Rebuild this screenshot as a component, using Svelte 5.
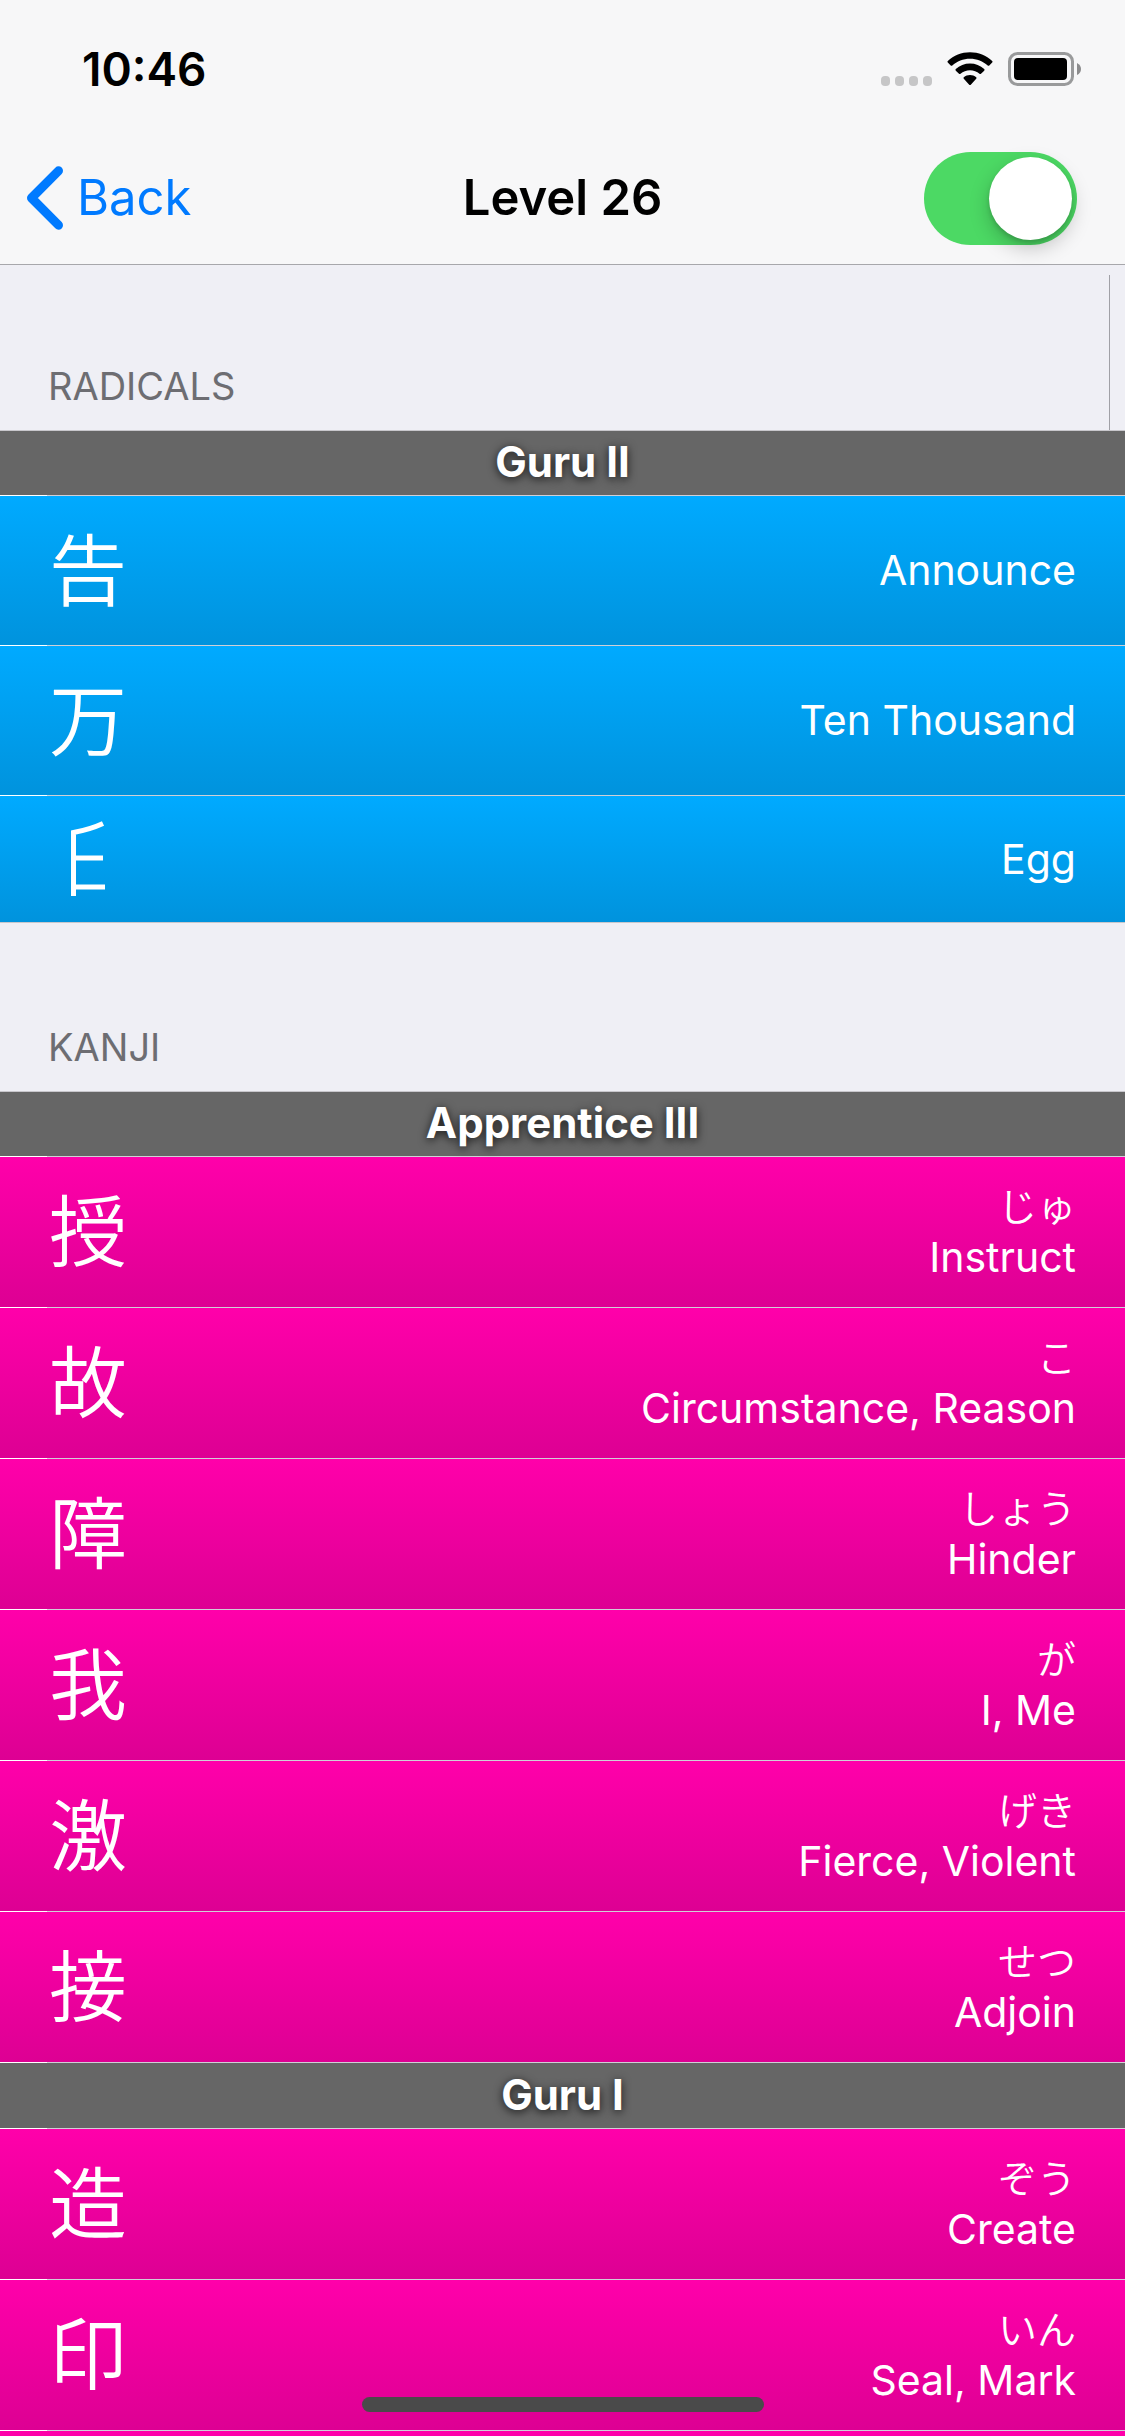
<script>
  let showAll = $state(true);

  const sections = [
    {
      title: 'Radicals',
      kind: 'radical',
      groups: [
        {
          stage: 'Guru II',
          items: [
            { glyph: '告', meaning: 'Announce' },
            { glyph: '万', meaning: 'Ten Thousand' },
            { drawn: true, meaning: 'Egg' }
          ]
        }
      ]
    },
    {
      title: 'Kanji',
      kind: 'kanji',
      groups: [
        {
          stage: 'Apprentice III',
          items: [
            { glyph: '授', reading: 'じゅ', meaning: 'Instruct' },
            { glyph: '故', reading: 'こ', meaning: 'Circumstance, Reason' },
            { glyph: '障', reading: 'しょう', meaning: 'Hinder' },
            { glyph: '我', reading: 'が', meaning: 'I, Me' },
            { glyph: '激', reading: 'げき', meaning: 'Fierce, Violent' },
            { glyph: '接', reading: 'せつ', meaning: 'Adjoin' }
          ]
        },
        {
          stage: 'Guru I',
          items: [
            { glyph: '造', reading: 'ぞう', meaning: 'Create' },
            { glyph: '印', reading: 'いん', meaning: 'Seal, Mark' },
            { meaning: '' }
          ]
        }
      ]
    }
  ];
</script>

<div class="screen">
  <header>
    <div class="status">
      <time>10:46</time>
      <div class="indicators">
        <svg class="signal" viewBox="0 0 51 34" aria-hidden="true">
          <g fill="#c6c6c7">
            <rect x="0" y="24" width="9" height="10" rx="4" />
            <rect x="14" y="24" width="9" height="10" rx="4" />
            <rect x="28" y="24" width="9" height="10" rx="4" />
            <rect x="42" y="24" width="9" height="10" rx="4" />
          </g>
        </svg>
        <svg class="wifi" viewBox="0 0 46 34" aria-hidden="true">
          <path d="M23 0.3C31.5 0.3 39.3 3.5 45.2 8.9Q46 9.7 45.2 10.5L42.3 13.5Q41.5 14.2 40.7 13.5C36 9.3 29.8 6.8 23 6.8S10 9.3 5.300 13.5Q4.500 14.200 3.700 13.500L0.800 10.500Q0 9.700 0.800 8.900C6.700 3.500 14.500 0.300 23 0.300Z" />
          <path d="M23 11.600C28.400 11.600 33.400 13.600 37.200 17.100Q38 17.900 37.200 18.700L34 21.800Q33.300 22.400 32.500 21.800C29.900 19.500 26.600 18.200 23 18.200S16.100 19.500 13.500 21.800Q12.700 22.400 12 21.800L8.800 18.700Q8 17.900 8.800 17.100C12.600 13.600 17.600 11.600 23 11.600Z" />
          <path d="M23 23C25.300 23 27.500 23.900 29.200 25.300Q30 26 29.200 26.800L23.800 32.700Q23 33.500 22.200 32.700L16.800 26.800Q16 26 16.800 25.300C18.500 23.900 20.700 23 23 23Z" />
        </svg>
        <svg class="battery" viewBox="0 0 74 34" aria-hidden="true">
          <rect x="1.500" y="1.500" width="63" height="31" rx="8" fill="none" stroke="#999a9b" stroke-width="3" />
          <rect x="6" y="6" width="53" height="22" rx="4" />
          <path d="M69 11Q73 13 73 17T69 23Z" fill="#8c8c8d" />
        </svg>
      </div>
    </div>
    <nav>
      <a class="back" href="#levels">
        <svg viewBox="0 0 38 64" aria-hidden="true">
          <path d="M32.500 4.800L5.500 32L32.500 59.200" fill="none" stroke="#007aff" stroke-width="9" stroke-linecap="round" stroke-linejoin="round" />
        </svg>
        <span>Back</span>
      </a>
      <h1>Level 26</h1>
      <input class="switch" type="checkbox" role="switch" aria-label="Show all items" bind:checked={showAll} />
    </nav>
  </header>

  <main>
    {#each sections as section}
      <section>
        <h2>{section.title}</h2>
        {#each section.groups as group}
          <div class="group">
            <h3>{group.stage}</h3>
            <ul>
              {#each group.items as item}
                <li>
                  <button class={['row', section.kind, item.drawn && 'short']} aria-label={item.meaning || 'More'}>
                    {#if item.drawn}
                      <svg class="egg" viewBox="0 0 78 78" aria-hidden="true">
                        <path d="M54 3.500Q41 9.500 24.500 12.500V76M24.500 38H54M24.500 67H56" fill="none" stroke="#fff" stroke-width="5" />
                      </svg>
                    {:else}
                      <span class="glyph" lang="ja">{item.glyph ?? ''}</span>
                    {/if}
                    <span class="answers">
                      {#if item.reading}<span class="reading" lang="ja">{item.reading}</span>{/if}
                      <span>{item.meaning}</span>
                    </span>
                  </button>
                </li>
              {/each}
            </ul>
          </div>
        {/each}
      </section>
    {/each}
    <div class="scroll-mark"></div>
  </main>
  <div class="home"></div>
</div>

<style>
  :global(body) {
    background: #efeff5;
  }
  .screen {
    position: relative;
    display: flex;
    flex-direction: column;
    height: 100vh;
    overflow: hidden;
    font-family: Inter, 'Noto Sans CJK JP', sans-serif;
    color: #000;
  }
  header {
    flex: none;
    background: #f7f7f8;
    border-bottom: 1px solid #a7a7ab;
  }
  .status {
    display: flex;
    justify-content: space-between;
    align-items: center;
    height: 132px;
    padding: 6px 43px 0 82px;
    box-sizing: border-box;
  }
  time {
    font-size: 46px;
    font-weight: 600;
    line-height: 54px;
  }
  .indicators {
    display: flex;
    gap: 15px;
  }
  .indicators svg {
    height: 34px;
  }
  .signal {
    width: 51px;
  }
  .wifi {
    width: 46px;
  }
  .battery {
    width: 74px;
  }
  nav {
    display: grid;
    grid-template-columns: 1fr auto 1fr;
    align-items: center;
    height: 132px;
    padding: 0 26px;
  }
  .back {
    display: flex;
    align-items: center;
    gap: 13px;
    color: #007aff;
    font-size: 49px;
    line-height: 60px;
    text-decoration: none;
  }
  .back svg {
    width: 38px;
    height: 64px;
  }
  h1 {
    margin: 0;
    font-size: 49px;
    font-weight: 600;
    line-height: 60px;
  }
  .switch {
    appearance: none;
    justify-self: end;
    display: flex;
    width: 153px;
    height: 93px;
    margin: 0 22px 0 0;
    padding: 5px;
    box-sizing: border-box;
    border-radius: 47px;
    background: #d8d8dc;
  }
  .switch::before {
    content: '';
    width: 83px;
    height: 83px;
    border-radius: 50%;
    background: #fff;
    box-shadow: 0 8px 20px rgba(0, 0, 0, 0.22), 0 3px 4px rgba(0, 0, 0, 0.14);
  }
  .switch:checked {
    justify-content: flex-end;
    background: #4cd964;
  }
  main {
    position: relative;
    flex: 1;
    min-height: 0;
    overflow: hidden;
  }
  h2 {
    display: flex;
    align-items: flex-end;
    box-sizing: border-box;
    height: 169px;
    margin: 0;
    padding: 0 48px 21px;
    border-bottom: 1px solid #c8c7cc;
    color: #6d6d72;
    font-size: 38px;
    font-weight: 400;
    line-height: 46px;
    text-transform: uppercase;
  }
  section:first-child h2 {
    height: 166px;
  }
  h3 {
    margin: 0;
    padding-bottom: 2px;
    background: #666;
    color: #fff;
    font-size: 42px;
    font-weight: 700;
    line-height: 62px;
    text-align: center;
    text-shadow: 0 2px 10px rgba(0, 0, 0, 0.8);
  }
  .group + .group h3 {
    line-height: 63px;
  }
  ul {
    margin: 0;
    padding: 0;
    list-style: none;
  }
  h3,
  li {
    border-bottom: 1px solid;
    border-image: linear-gradient(to right, #fff 48px, #d0cfd6 48px) 1;
  }
  section:first-child li:last-child {
    border-image: none;
    border-color: #c8c7cc;
  }
  .row {
    display: flex;
    align-items: center;
    justify-content: space-between;
    width: 100%;
    height: 150px;
    padding: 0 49px;
    border: 0;
    color: #fff;
    font-family: inherit;
    font-size: 41px;
    line-height: 51px;
    text-align: right;
  }
  .radical {
    height: 149px;
    background: linear-gradient(#0af, #0093dd);
  }
  .short {
    height: 126px;
  }
  .kanji {
    background: linear-gradient(#f0a, #dd0093);
  }
  .glyph {
    padding-bottom: 10px;
    font-family: 'Noto Sans CJK JP', sans-serif;
    font-size: 78px;
    font-weight: 350;
    line-height: 90px;
  }
  .egg {
    width: 78px;
    height: 78px;
  }
  .answers {
    display: flex;
    flex-direction: column;
  }
  .reading {
    padding-bottom: 4px;
    font-family: 'Noto Sans CJK JP', sans-serif;
    font-size: 39px;
    font-weight: 350;
    line-height: 47px;
  }
  .scroll-mark {
    position: absolute;
    top: 10px;
    right: 15px;
    width: 1px;
    height: 155px;
    background: #a0a0a6;
  }
  .home {
    position: absolute;
    bottom: 24px;
    left: 50%;
    width: 402px;
    height: 15px;
    border-radius: 8px;
    background: #4a4a4a;
    transform: translateX(-50%);
  }
</style>
